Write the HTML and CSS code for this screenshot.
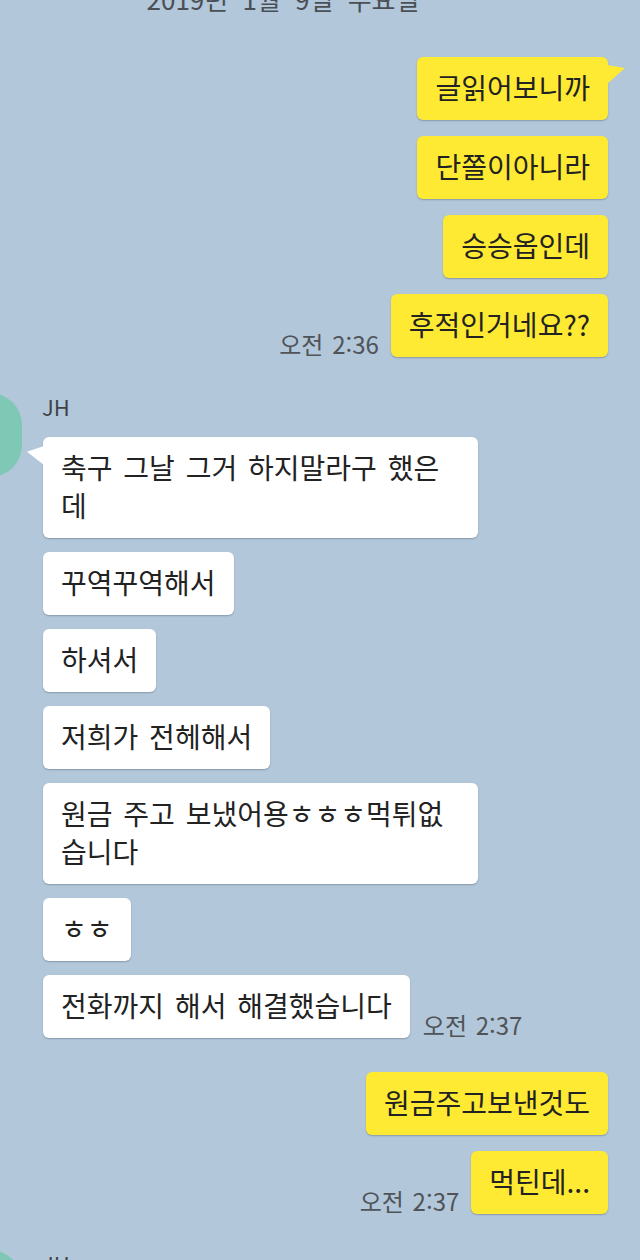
FILE: index.html
```html
<!DOCTYPE html>
<html lang="ko">
<head>
<meta charset="utf-8">
<title>Chat</title>
<link rel="stylesheet" href="styles.css">
</head>
<body>
<div class="chat">
  <div class="date">2019년 1월 9일 수요일</div>

  <div class="group me first">
    <div class="row"><div class="bubble yellow tail-r">글읽어보니까</div></div>
    <div class="row"><div class="bubble yellow">단쫄이아니라</div></div>
    <div class="row"><div class="bubble yellow">승승옵인데</div></div>
    <div class="row"><span class="time">오전 2:36</span><div class="bubble yellow">후적인거네요??</div></div>
  </div>

  <div class="group other">
    <div class="avatar"></div>
    <div class="col">
      <div class="name">JH</div>
      <div class="msgs">
        <div class="row"><div class="bubble white tail-l wide">축구 그날 그거 하지말라구 했은<br>데</div></div>
        <div class="row"><div class="bubble white">꾸역꾸역해서</div></div>
        <div class="row"><div class="bubble white">하셔서</div></div>
        <div class="row"><div class="bubble white">저희가 전헤해서</div></div>
        <div class="row"><div class="bubble white wide">원금 주고 보냈어용ㅎㅎㅎ먹튀없<br>습니다</div></div>
        <div class="row"><div class="bubble white">ㅎㅎ</div></div>
        <div class="row"><div class="bubble white">전화까지 해서 해결했습니다</div><span class="time">오전 2:37</span></div>
      </div>
    </div>
  </div>

  <div class="group me second">
    <div class="row"><div class="bubble yellow">원금주고보낸것도</div></div>
    <div class="row"><span class="time">오전 2:37</span><div class="bubble yellow">먹틴데...</div></div>
  </div>

  <div class="group other">
    <div class="avatar"></div>
    <div class="col">
      <div class="name">JH</div>
    </div>
  </div>
</div>
</body>
</html>
```

FILE: styles.css
```css
* { box-sizing: border-box; }

html, body {
  margin: 0;
  padding: 0;
  background: #b2c7da;
  overflow: hidden;
}

body {
  width: 640px;
  height: 1260px;
  font-family: "Noto Sans CJK KR", "Noto Sans", sans-serif;
  color: #222;
}

.chat {
  display: flex;
  flex-direction: column;
}

.date {
  margin-top: -15px;
  height: 28px;
  display: flex;
  justify-content: center;
  padding-right: 74px;
  font-size: 26px;
  line-height: 28px;
  word-spacing: 7px;
  color: #4a4f55;
}

.group.me {
  display: flex;
  flex-direction: column;
  gap: 16px;
  padding-right: 32px;
}

.group.me .row {
  display: flex;
  justify-content: flex-end;
  align-items: flex-end;
}

.group.me.first { margin-top: 44px; }
.group.me.second { margin-top: 34px; }

.group.other {
  display: flex;
  margin-top: 36px;
}

.avatar {
  width: 84px;
  height: 84px;
  margin-left: -62px;
  border-radius: 32px;
  background: #7fc8b5;
  flex: none;
}

.col {
  margin-left: 20px;
  padding-top: 1px;
  display: flex;
  flex-direction: column;
}

.name {
  font-size: 22px;
  line-height: 24px;
  color: #3f4347;
  margin-bottom: 19px;
}

.msgs {
  display: flex;
  flex-direction: column;
  gap: 14px;
  margin-left: 1px;
}

.msgs .row {
  display: flex;
  align-items: flex-end;
}

.bubble {
  position: relative;
  font-size: 28px;
  line-height: 38px;
  word-spacing: 3px;
  padding: 11px 18px 14px;
  border-radius: 6px;
  box-shadow: 0 1px 1.5px rgba(60, 70, 80, 0.35);
  white-space: nowrap;
}

.bubble.yellow { background: #fee933; }
.bubble.white { background: #ffffff; }
.bubble.wide { width: 435px; }

.tail-r::after {
  content: "";
  position: absolute;
  top: 8px;
  right: -17px;
  width: 18px;
  height: 19px;
  background: #fee933;
  clip-path: polygon(0 0, 100% 16%, 0 100%);
}

.tail-l::after {
  content: "";
  position: absolute;
  top: 9px;
  left: -16px;
  width: 17px;
  height: 19px;
  background: #ffffff;
  clip-path: polygon(100% 0, 0 30%, 100% 100%);
}

.time {
  font-size: 24px;
  line-height: 24px;
  word-spacing: 2px;
  color: #505458;
  margin-bottom: 1px;
  white-space: nowrap;
}

.group.me .time { margin-right: 12px; }
.msgs .time { margin-left: 13px; }
```
